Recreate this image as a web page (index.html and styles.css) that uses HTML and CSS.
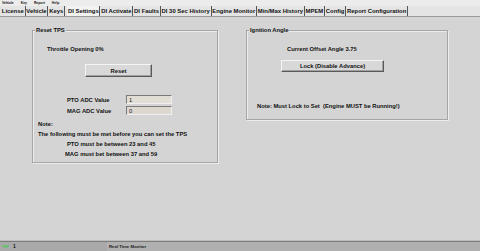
FILE: index.html
```html
<!DOCTYPE html>
<html>

<head>
  <meta charset="UTF-8">
  <title>DI Settings</title>
  <link rel="stylesheet" href="styles.css">
</head>

<body>
  <div class="window">
    <ul class="menubar">
      <li class="menu-item">Vehicle</li>
      <li class="menu-item">Key</li>
      <li class="menu-item">Report</li>
      <li class="menu-item">Help</li>
    </ul>
    <ul class="tabs">
      <li class="tab">License</li>
      <li class="tab">Vehicle</li>
      <li class="tab">Keys</li>
      <li class="tab active">DI Settings</li>
      <li class="tab">DI Activate</li>
      <li class="tab">DI Faults</li>
      <li class="tab">DI 30 Sec History</li>
      <li class="tab">Engine Monitor</li>
      <li class="tab">Min/Max History</li>
      <li class="tab">MPEM</li>
      <li class="tab">Config</li>
      <li class="tab">Report Configuration</li>
    </ul>
    <div class="page">
      <div class="group reset-group">
        <span class="group-title">Reset TPS</span>
        <div class="line throttle">Throttle Opening 0%</div>
        <button class="btn reset-btn">Reset</button>
        <div class="field pto-field">
          <label for="pto" class="field-label">PTO ADC Value</label>
          <input type="text" id="pto" class="field-input" value="1">
        </div>
        <div class="field">
          <label for="mag" class="field-label">MAG ADC Value</label>
          <input type="text" id="mag" class="field-input" value="0" disabled>
        </div>
        <div class="line note">Note:</div>
        <div class="line note">The following must be met before you can set the TPS</div>
        <div class="line pto-range">PTO must be between 23 and 45</div>
        <div class="line mag-range">MAG must bet between 37 and 59</div>
      </div>
      <div class="group ignition-group">
        <span class="group-title">Ignition Angle</span>
        <div class="line offset">Current Offset Angle 3.75</div>
        <button class="btn lock-btn">Lock (Disable Advance)</button>
        <div class="line lock-note">Note: Must Lock to Set&nbsp; (Engine MUST be Running!)</div>
      </div>
    </div>
    <div class="statusbar">
      <span class="pane led">TIP</span>
      <span class="pane num">1</span>
      <span class="pane title">Real Time Monitor</span>
    </div>
  </div>
</body>

</html>
```

FILE: styles.css
```css
html,
body {
  margin: 0;
  height: 100%;
  overflow: hidden;
}

body {
  font-family: "Liberation Sans", Arial, sans-serif;
  font-weight: bold;
  font-size: 5.8px;
  color: #111;
  background-color: #d4d4d4;
}

.window {
  display: flex;
  flex-direction: column;
  height: 100%;
}

.menubar {
  list-style-type: none;
  margin: 0;
  padding: 0 0 0 2px;
  height: 6px;
  display: flex;
  gap: 7px;
  font-size: 3.4px;
  line-height: 6px;
  background-color: #ececec;
}

.tabs {
  list-style-type: none;
  margin: 0;
  padding: 0 0 0 1px;
  height: 10px;
  display: flex;
  border-bottom: 1px solid #9a9a9a;
  background-color: #e4e4e4;
}

.tab {
  padding: 0 0.8px;
  line-height: 10px;
  font-size: 5.9px;
  border-right: 1px solid #555;
  white-space: nowrap;
}

.tab.active {
  background-color: #f2f2f2;
  margin-left: 2px;
}

.page {
  flex: 1;
  display: flex;
  align-items: flex-start;
  gap: 28px;
  padding: 13px 0 0 32px;
}

.group {
  position: relative;
  display: flex;
  flex-direction: column;
  align-items: flex-start;
  box-sizing: border-box;
  border: 1px solid #a6a6a6;
  box-shadow: inset 1px 1px 0 #ececec, 1px 1px 0 #ececec;
}

.group-title {
  position: absolute;
  top: -4px;
  left: 2px;
  padding: 0 1px;
  line-height: 7px;
  background-color: #d4d4d4;
}

.line {
  line-height: 10px;
  white-space: nowrap;
}

.reset-group {
  width: 186px;
  padding-bottom: 3px;
}

.throttle {
  margin: 13px 0 0 14px;
}

.btn {
  font: inherit;
  color: inherit;
  padding: 0;
  background-color: #d8d8d8;
  border: 1px solid;
  border-color: #f4f4f4 #5a5a5a #5a5a5a #f4f4f4;
  box-shadow: inset -1px -1px 0 #a0a0a0;
}

.reset-btn {
  width: 67px;
  height: 13px;
  margin: 10px 0 0 52px;
}

.field {
  display: flex;
  align-items: center;
  margin: 2px 0 0 34px;
}

.pto-field {
  margin-top: 18px;
}

.field-label {
  width: 59px;
}

.field-input {
  box-sizing: border-box;
  width: 46px;
  height: 9px;
  padding: 0 2px;
  font: inherit;
  font-weight: normal;
  color: #111;
  border: 1px solid;
  border-color: #7a7a7a #f0f0f0 #f0f0f0 #7a7a7a;
  background-color: #e2ded6;
}

.field-input:disabled {
  background-color: #dcd8d0;
}

.note {
  margin-left: 5px;
}

.field + .note {
  margin-top: 4px;
}

.pto-range {
  margin-left: 34px;
}

.mag-range {
  margin-left: 32px;
}

.ignition-group {
  width: 202px;
  padding-bottom: 8px;
}

.offset {
  margin: 13px 0 0 40px;
}

.lock-btn {
  width: 103px;
  height: 12px;
  margin: 6px 0 0 34px;
}

.lock-note {
  margin: 29px 0 0 10px;
}

.statusbar {
  height: 9px;
  display: flex;
  align-items: center;
  border-top: 1px solid #7c7c7c;
  box-shadow: 0 -1px 0 #bcbcbc;
  background-color: #a9a9a9;
  font-weight: bold;
  font-size: 4.3px;
}

.pane {
  line-height: 9px;
  white-space: nowrap;
}

.led {
  width: 11px;
  padding-left: 2px;
  color: #3fd04a;
}

.num {
  width: 94px;
  font-size: 5px;
}

.title {
  flex: 1;
  padding-left: 2px;
  color: #222;
  background-color: #b0b0b0;
}
```
